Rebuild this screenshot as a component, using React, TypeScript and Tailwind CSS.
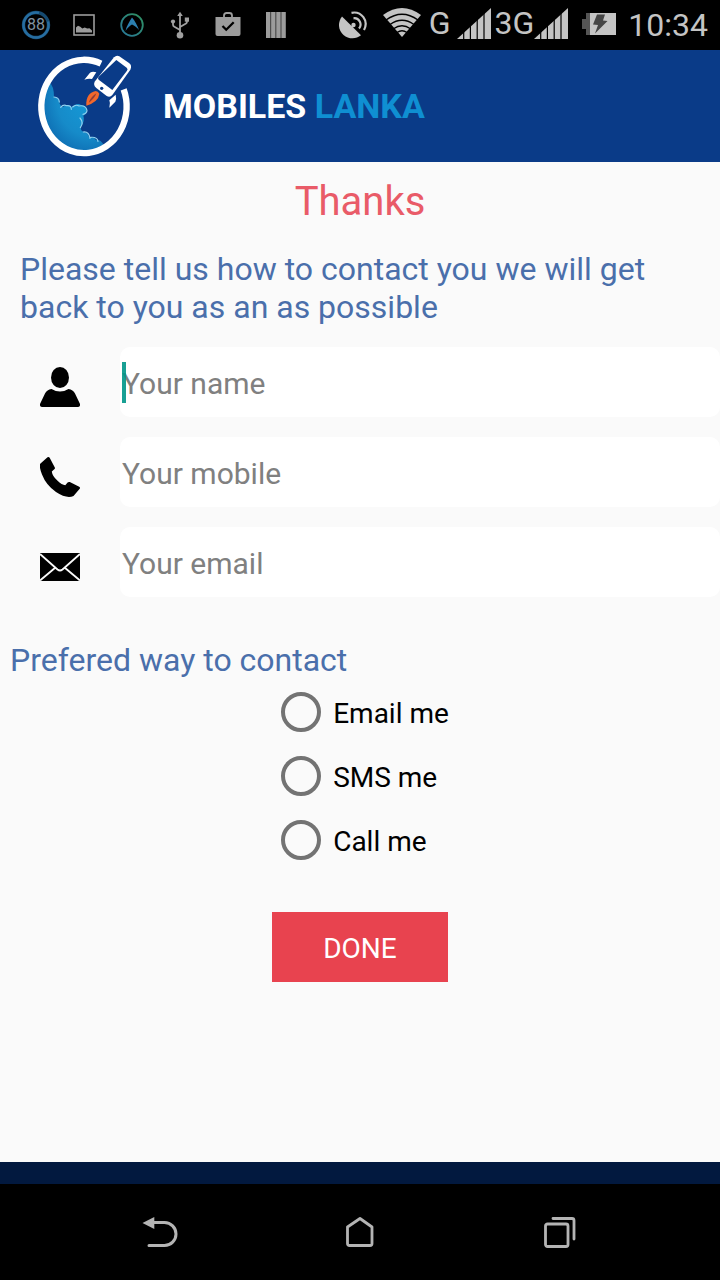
import type { ReactNode } from 'react';

type IconProps = { className?: string };

function BatteryRingIcon() {
  return (
    <span className="relative flex h-8 w-8 items-center justify-center">
      <svg viewBox="0 0 32 32" className="absolute inset-0 h-8 w-8" fill="none">
        <circle cx="16" cy="16" r="12.5" stroke="#164a70" strokeWidth="3.4" />
        <path d="M19 3.9A12.5 12.5 0 1 0 28 12.5" stroke="#276da0" strokeWidth="2.4" />
      </svg>
      <span className="relative text-base text-[#8293a2]">88</span>
    </span>
  );
}

function PictureIcon() {
  return (
    <svg viewBox="0 0 22 22" className="h-[22px] w-[22px]" fill="none">
      <rect x="1" y="1" width="20" height="20" stroke="#9c9c9c" strokeWidth="1.6" />
      <path d="M3 18.5v-5l2-1.8 2.3 1 2 1.8 2.4-1 2.5 1 2.3-.2 2.5 2.2v2z" fill="#9c9c9c" />
    </svg>
  );
}

function CompassIcon() {
  return (
    <svg viewBox="0 0 24 24" className="h-6 w-6" fill="none">
      <defs>
        <linearGradient id="compass" x1="1" y1="0" x2="0" y2="1">
          <stop offset="0" stopColor="#2f9160" />
          <stop offset="1" stopColor="#28779a" />
        </linearGradient>
      </defs>
      <circle cx="12" cy="12" r="10.8" stroke="url(#compass)" strokeWidth="1.8" />
      <path d="M12 4.5C9.5 8.5 6.5 13 5.5 18c2-3 4.500-5.500 6.500-6.500 2.500 1 5 3 7 5.500C17.500 12.500 15 8 12 4.500z" fill="#2c7fb0" />
    </svg>
  );
}

function UsbIcon() {
  return (
    <svg viewBox="0 0 20 28" className="h-7 w-5" fill="none" stroke="#a0a0a0" strokeWidth="1.8">
      <path d="M10 3v20M10 19l-6-3.5q-1-.6-1-2V11M10 16l6-3.5q1-.6 1-2V9" />
      <path d="M10 .8 12.8 5H7.200z" fill="#a0a0a0" stroke="none" />
      <circle cx="10" cy="24.2" r="3.3" fill="#a0a0a0" stroke="none" />
      <circle cx="3" cy="10.5" r="2.1" fill="#a0a0a0" stroke="none" />
      <path d="M14.8 6.500h4.200v4.200h-4.200z" fill="#a0a0a0" stroke="none" />
    </svg>
  );
}

function StoreCheckIcon() {
  return (
    <svg viewBox="0 0 26 26" className="h-[26px] w-[26px]" fill="none">
      <path d="M9 5V3.500Q9 1 11.500 1h3Q17 1 17 3.500V5" stroke="#9c9c9c" strokeWidth="1.8" />
      <path d="M.5 5h25v17q0 2-2 2h-21q-2 0-2-2z" fill="#9c9c9c" />
      <path d="m7.500 14 3.700 3.700 7.500-7.500" stroke="#000" strokeWidth="2.300" />
    </svg>
  );
}

function StripesIcon() {
  return (
    <svg viewBox="0 0 20 26" className="h-[26px] w-5" fill="#9c9c9c">
      <path d="M0 0h4.500v26H0zM5.100 0h4.500v26H5.100zM10.200 0h4.500v26h-4.500zM15.300 0h4.500v26h-4.500z" />
    </svg>
  );
}

function DishIcon() {
  return (
    <svg viewBox="0 0 28 28" className="h-7 w-7" fill="none" stroke="#c4c4c4">
      <path d="M3 5.500C-1.500 11.500-1 19 4.500 24c5 4.300 12.500 4.500 17.500.3z" fill="#c4c4c4" stroke="none" />
      <circle cx="14.500" cy="14" r="2.200" fill="#c4c4c4" stroke="none" />
      <path d="m13 16 2-2" strokeWidth="2" />
      <path d="M14.500 7.300a6.200 6.200 0 0 1 5.500 10.200" strokeWidth="2.200" />
      <path d="M12.500 1.800c10-2 17.500 8 12.500 17.200" strokeWidth="2.200" />
    </svg>
  );
}

function WifiIcon() {
  return (
    <svg viewBox="0 0 38 30" className="h-[30px] w-[38px]">
      <path d="M0 7Q19-7 38 7L19 29z" fill="#c4c4c4" />
      <g fill="none" stroke="#000" strokeWidth="1.4">
        <path d="M3 12q16-11.500 32 0M7 16.500q12-8.500 24 0M10.500 20.800q8.500-6 17 0M14 24.500q5-3.500 10 0" />
      </g>
    </svg>
  );
}

function SignalIcon() {
  return (
    <svg viewBox="0 0 34 31" className="mb-[3px] h-[31px] w-[34px]">
      <path d="M0 31 34 0v31z" fill="#c4c4c4" />
      <path d="M6.700 23v8M13.400 17v14M20.200 11v20M27 5v26" stroke="#000" strokeWidth="1.200" />
    </svg>
  );
}

function ChargingIcon() {
  return (
    <svg viewBox="0 0 34 22" className="mb-0.5 h-[22px] w-[34px]">
      <path d="M0 6h4V0h5v22H4v-6H0z" fill="#555" />
      <path d="M8 0h26v22H8z" fill="#c4c4c4" />
      <path d="M15 1.500h8l-2 6 4.500.5L13 20.500 16 12l-5-.5z" fill="#454545" />
    </svg>
  );
}

function StatusBar() {
  const notifications: ReactNode[] = [
    <BatteryRingIcon />,
    <PictureIcon />,
    <CompassIcon />,
    <UsbIcon />,
    <StoreCheckIcon />,
    <StripesIcon />,
  ];

  return (
    <div className="flex h-[50px] items-center justify-between bg-black px-3 text-[32px] leading-8 text-[#c4c4c4]">
      <div className="flex items-center">
        {notifications.map((icon, index) => (
          <span key={index} className="flex w-12 justify-center">
            {icon}
          </span>
        ))}
      </div>
      <div className="flex items-center">
        <DishIcon />
        <span className="ml-4 mb-1">
          <WifiIcon />
        </span>
        <span className="ml-2 mb-1">G</span>
        <span className="ml-1.5">
          <SignalIcon />
        </span>
        <span className="ml-1 mb-1">3G</span>
        <SignalIcon />
        <span className="ml-3.5">
          <ChargingIcon />
        </span>
        <span className="ml-3">10:34</span>
      </div>
    </div>
  );
}

function LogoMark() {
  return (
    <svg viewBox="48 24 294 312" className="h-[104px] w-[98px]" fill="none">
      <defs>
        <radialGradient id="sea" cx="0.75" cy="0.25" r="0.9">
          <stop offset="0" stopColor="#159bd8" />
          <stop offset="0.6" stopColor="#168bc9" />
          <stop offset="1" stopColor="#0c67ae" />
        </radialGradient>
      </defs>
      {/* clouds */}
      <path
        d="M88 108q14 12 14 45 18 2 17 20 6 12 10 10 12-12 26 0 16-14 28-6 18 0 17 20-2 10-10 12 6 16-8 34 0 12 8 14 14 2 18 18 14-4 20 8 12-4 22 12l6-4Q226 318 170 312 96 296 74 214q-8-60 14-106z"
        fill="url(#sea)"
      />
      <g stroke="#8fd0ef" strokeWidth="3.500" strokeLinecap="round">
        <path d="M102 153q15 1 16 15M122 184q8-10 18-5 14-2 14 11M158 183q8-8 18-4M176 180q22-4 25 13 0 10-12 12M180 216q12 14 1 29M190 258q17-2 20 19M212 274q20-2 22 12" />
      </g>
      {/* ring */}
      <path d="M311 130A128 140 0 1 1 243 53" stroke="#fff" strokeWidth="19" />
      {/* fins */}
      <path d="M193 101 210 80q8-5 19-1l-13 20q-10-3-23 2zM287 146q3 12-1 21l-18 18q4-14 0-22z" fill="#fff" />
      {/* exhaust */}
      <path d="M199 179q-2-38 28-44 7 0 11 8-2 24-39 36z" fill="#f2682c" />
      <path d="M206 170q8-19 23-28-6 17-23 28z" fill="#8f3c35" />
      {/* handset */}
      <path
        d="M282 34q8-8 16-3l29 20q10 7 4 20l-54 76q-7 9-17 3l-31-24q-11-9-4-20z"
        fill="#fff"
      />
      <path d="m289 42 31 23q5 4 1 9l-44 58-41-31q-4-4 0-9z" fill="#0a3b88" />
      <circle cx="245" cy="127" r="5" fill="#0a3b88" />
    </svg>
  );
}

function PersonIcon({ className }: IconProps) {
  return (
    <svg viewBox="0 0 40 40" className={className} fill="currentColor">
      <ellipse cx="20" cy="10.500" rx="9" ry="10.500" />
      <path d="M11.500 22q8.500 5 17 0 4.500.5 6.500 4.500L40 37q.5 3-2.500 3h-35Q-.5 40 0 37l5-10.500q2-4 6.500-4.500z" />
    </svg>
  );
}

function HandsetIcon({ className }: IconProps) {
  return (
    <svg viewBox="0 0 40 40" className={className} fill="currentColor">
      <path d="M7.500.3q1.500-.8 2.300.7l5 9.500q.5 1-.5 1.700l-2.500 2.300q.5 4.500 5.500 9 4.500 4.500 8 4.700l2.300-2.700q1-1 2.200-.4l9.400 4.700q1.300.7.5 2L33.500 39q-7 3-17.500-4Q6 28 2 17.500-1.500 8.500.5 6.500z" />
    </svg>
  );
}

function EnvelopeIcon({ className }: IconProps) {
  return (
    <svg viewBox="0 0 40 40" className={className} fill="none">
      <path d="M0 6h40v28H0z" fill="#000" />
      <path d="m0 7 17.500 15.500q2.500 2 5 0L40 7M0 33.500l15.500-13M40 33.500l-15.500-13" stroke="#fafafa" strokeWidth="1.800" />
    </svg>
  );
}

const fields = [
  { id: 'name', type: 'text', placeholder: 'Your name', Icon: PersonIcon },
  { id: 'mobile', type: 'tel', placeholder: 'Your mobile', Icon: HandsetIcon },
  { id: 'email', type: 'email', placeholder: 'Your email', Icon: EnvelopeIcon },
];

const contactOptions = [
  { value: 'email', label: 'Email me' },
  { value: 'sms', label: 'SMS me' },
  { value: 'call', label: 'Call me' },
];

function ContactForm() {
  return (
    <form className="flex flex-col" onSubmit={(e) => e.preventDefault()}>
      <div className="mt-[21px] flex flex-col gap-5">
        {fields.map(({ id, type, placeholder, Icon }) => (
          <div key={id} className="flex">
            <label htmlFor={id} aria-label={placeholder} className="px-10 pt-5">
              <Icon className="h-10 w-10" />
            </label>
            <div className="relative flex-1">
              <input
                id={id}
                type={type}
                placeholder={placeholder}
                className="h-[70px] w-full rounded-[10px] bg-white pt-0.5 pl-0.5 text-[30px] text-black outline-none placeholder:text-[#808080]"
              />
              {/* text caret of the active field */}
              {id === 'name' && <span className="absolute left-0.5 top-[15px] h-[41px] w-1 bg-[#009688]/90" />}
            </div>
          </div>
        ))}
      </div>

      <fieldset className="mt-11 flex flex-col">
        <legend className="contents">
          <span className="block px-2.5 text-[32px] leading-[38px] text-[#4a6fab]">Prefered way to contact</span>
        </legend>
        <div className="mx-auto mt-px flex flex-col pl-2.5">
          {contactOptions.map(({ value, label }) => (
            <label key={value} className="flex h-16 items-center gap-3 text-[28px] text-black">
              <input
                type="radio"
                name="contact"
                value={value}
                className="h-10 w-10 appearance-none rounded-full border-4 border-[#737373] checked:bg-[#009688]"
              />
              <span className="pt-1">{label}</span>
            </label>
          ))}
        </div>
      </fieldset>

      <button type="submit" className="mx-auto mt-10 h-[70px] w-44 bg-[#e8434f] pt-1 text-[28px] text-white">
        DONE
      </button>
    </form>
  );
}

function NavigationBar() {
  return (
    <nav className="flex h-24 items-center bg-black px-[60px]">
      <button type="button" aria-label="Back" className="flex flex-1 justify-center">
        <svg viewBox="0 0 36 32" className="h-8 w-9" fill="none" stroke="#b4b4b4" strokeWidth="3" strokeLinecap="round">
          <path d="M11 6.500h11.500a11.500 11.500 0 0 1 0 23H7" />
          <path d="M.5 7 12.300 1v12z" fill="#b4b4b4" stroke="none" />
        </svg>
      </button>
      <button type="button" aria-label="Home" className="flex flex-1 justify-center">
        <svg viewBox="0 0 28 32" className="h-8 w-7" fill="none" stroke="#b4b4b4" strokeWidth="2.800" strokeLinejoin="round">
          <path d="M1.500 11 14 2.500 26 11v16.500q0 2-2 2H3.500q-2 0-2-2z" />
        </svg>
      </button>
      <button type="button" aria-label="Recent apps" className="flex flex-1 justify-center">
        <svg viewBox="0 0 32 32" className="h-8 w-8" fill="none" stroke="#b4b4b4" strokeWidth="2.800" strokeLinecap="round">
          <rect x="1.500" y="8" width="22.500" height="22.500" rx="2" />
          <path d="M9 2.500h19q2 0 2 2V23" />
        </svg>
      </button>
    </nav>
  );
}

export default function App() {
  return (
    <div className="flex min-h-screen flex-col bg-[#fafafa] font-['Roboto',sans-serif]">
      <StatusBar />
      <header className="flex h-28 items-center bg-[#0a3b88] pl-9">
        <LogoMark />
        <span className="ml-[29px] text-[34px] font-bold text-white">
          MOBILES <span className="text-[#0f8fd2]">LANKA</span>
        </span>
      </header>
      <main className="flex-1 pt-4">
        <h1 className="text-center text-[40px] leading-[48px] text-[#e95b68]">Thanks</h1>
        <p className="mt-6 px-5 text-[32px] leading-[38px] text-[#4a6fab]">
          Please tell us how to contact you we will get back to you as an as possible
        </p>
        <ContactForm />
      </main>
      <div className="h-[22px] bg-[#02193f]" />
      <NavigationBar />
    </div>
  );
}
